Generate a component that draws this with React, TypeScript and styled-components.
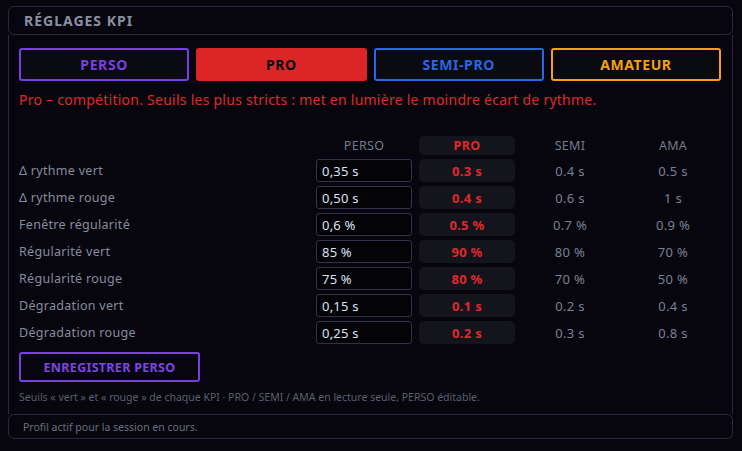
import React from "react";
import styled, { createGlobalStyle } from "styled-components";

const Global = createGlobalStyle`
  html, body { margin: 0; padding: 0; background: #07060e; }
  body { font-family: "Noto Sans", "DejaVu Sans", sans-serif; }
  * { box-sizing: border-box; }
`;

const Page = styled.div`
  width: 742px;
  height: 451px;
  padding: 6px 9px 0 8px;
  background: #07060e;
`;

const Panel = styled.div`
  display: flex;
  flex-direction: column;
`;

const Header = styled.div`
  height: 29px;
  border: 1px solid #2a2840;
  border-radius: 6px;
  display: flex;
  align-items: center;
  padding-left: 15px;
  font-size: 14px;
  font-weight: 700;
  letter-spacing: 1px;
  color: #8a90a3;
`;

const Body = styled.div`
  border-left: 1px solid #2a2840;
  border-right: 1px solid #2a2840;
  padding: 13px 11px 0 10px;
  height: 379px;
  display: flex;
  flex-direction: column;
`;

const Tabs = styled.div`
  display: grid;
  grid-template-columns: repeat(4, 1fr);
  gap: 7px;
`;

const Tab = styled.button<{ $c: string; $active?: boolean }>`
  height: 33px;
  border-radius: 3px;
  border: 2px solid ${(p) => p.$c};
  background: ${(p) => (p.$active ? p.$c : "#0a0a11")};
  color: ${(p) => (p.$active ? "#0a0a0a" : p.$c)};
  font-family: inherit;
  font-size: 14px;
  font-weight: 700;
  letter-spacing: 0.6px;
`;

const Desc = styled.div`
  margin-top: 10px;
  font-size: 14px;
  letter-spacing: 0.25px;
  color: #e0282b;
  line-height: 18px;
`;

const Table = styled.div`
  margin-top: 27px;
  display: grid;
  grid-template-columns: 1fr 96px 96px 96px 96px;
  column-gap: 7px;
  row-gap: 4px;
  align-items: center;
`;

const HeadCell = styled.div<{ $pro?: boolean }>`
  height: 19px;
  display: flex;
  align-items: center;
  justify-content: center;
  font-size: 12.5px;
  letter-spacing: 0.3px;
  border-radius: 5px;
  color: ${(p) => (p.$pro ? "#e0282b" : "#757b8e")};
  font-weight: ${(p) => (p.$pro ? 700 : 400)};
  background: ${(p) => (p.$pro ? "#14141c" : "transparent")};
`;

const Label = styled.div`
  font-size: 12.5px;
  letter-spacing: 0.3px;
  color: #878c9e;
  height: 23px;
  display: flex;
  align-items: center;
`;

const Input = styled.input`
  width: 96px;
  height: 23px;
  border: 1px solid #34324a;
  border-radius: 3px;
  background: #040408;
  color: #dde2f0;
  font-family: inherit;
  font-size: 13px;
  letter-spacing: 0.2px;
  padding: 0 5px;
  outline: none;
`;

const ProCell = styled.div`
  height: 23px;
  border-radius: 5px;
  background: #14141c;
  color: #e0282b;
  font-weight: 700;
  font-size: 13px;
  letter-spacing: 0.3px;
  display: flex;
  align-items: center;
  justify-content: center;
`;

const RefCell = styled.div`
  height: 23px;
  color: #7b8194;
  font-size: 13px;
  letter-spacing: 0.3px;
  display: flex;
  align-items: center;
  justify-content: center;
`;

const SaveButton = styled.button`
  margin-top: 8px;
  align-self: flex-start;
  width: 181px;
  height: 30px;
  border: 2px solid #7a3fe0;
  border-radius: 3px;
  background: #07060e;
  color: #7d44e6;
  font-family: inherit;
  font-size: 12.5px;
  font-weight: 700;
  letter-spacing: 0.3px;
`;

const Note = styled.div`
  margin-top: 8px;
  font-size: 10.5px;
  color: #5a5f70;
`;

const Footer = styled.div`
  height: 25px;
  border: 1px solid #2a2840;
  border-radius: 6px;
  display: flex;
  align-items: center;
  padding-left: 14px;
  font-size: 10.5px;
  color: #6a6f80;
`;

const rows = [
  ["Δ rythme vert", "0,35 s", "0.3 s", "0.4 s", "0.5 s"],
  ["Δ rythme rouge", "0,50 s", "0.4 s", "0.6 s", "1 s"],
  ["Fenêtre régularité", "0,6 %", "0.5 %", "0.7 %", "0.9 %"],
  ["Régularité vert", "85 %", "90 %", "80 %", "70 %"],
  ["Régularité rouge", "75 %", "80 %", "70 %", "50 %"],
  ["Dégradation vert", "0,15 s", "0.1 s", "0.2 s", "0.4 s"],
  ["Dégradation rouge", "0,25 s", "0.2 s", "0.3 s", "0.8 s"],
];

export default function App() {
  return (
    <Page>
      <Global />
      <Panel>
        <Header>RÉGLAGES KPI</Header>
        <Body>
          <Tabs>
            <Tab $c="#7a3fe0">PERSO</Tab>
            <Tab $c="#dc2626" $active>PRO</Tab>
            <Tab $c="#2b66e6">SEMI-PRO</Tab>
            <Tab $c="#f5a110">AMATEUR</Tab>
          </Tabs>
          <Desc>
            Pro – compétition. Seuils les plus stricts : met en lumière le moindre écart de rythme.
          </Desc>
          <Table>
            <div />
            <HeadCell>PERSO</HeadCell>
            <HeadCell $pro>PRO</HeadCell>
            <HeadCell>SEMI</HeadCell>
            <HeadCell>AMA</HeadCell>
            {rows.map((r) => (
              <React.Fragment key={r[0]}>
                <Label>{r[0]}</Label>
                <Input defaultValue={r[1]} />
                <ProCell>{r[2]}</ProCell>
                <RefCell>{r[3]}</RefCell>
                <RefCell>{r[4]}</RefCell>
              </React.Fragment>
            ))}
          </Table>
          <SaveButton>ENREGISTRER PERSO</SaveButton>
          <Note>
            Seuils « vert » et « rouge » de chaque KPI · PRO / SEMI / AMA en lecture seule, PERSO éditable.
          </Note>
        </Body>
        <Footer>Profil actif pour la session en cours.</Footer>
      </Panel>
    </Page>
  );
}
